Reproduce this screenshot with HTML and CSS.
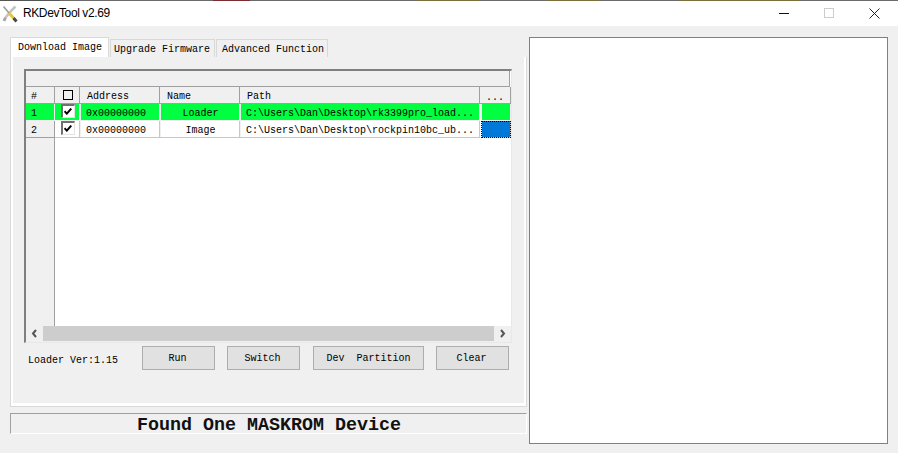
FILE: index.html
```html
<!DOCTYPE html>
<html lang="en">
<head>
<meta charset="utf-8">
<title>RKDevTool v2.69</title>
<link rel="stylesheet" href="styles.css">
</head>
<body>
<div class="window">
  <div class="top-strip"></div>
  <header class="titlebar">
    <div class="title-left">
      <svg class="app-icon" width="16" height="18" viewBox="0 0 16 18">
        <path d="M13.5 1.5 L10 5 L3.5 12.5" stroke="#c4c4c4" stroke-width="2.6" fill="none"/>
        <path d="M3.5 12.5 L2 16" stroke="#a8a8a8" stroke-width="3" fill="none"/>
        <path d="M1.5 1.5 L7 8" stroke="#9c9c9c" stroke-width="1.6" fill="none"/>
        <path d="M7 8 L11.5 13" stroke="#e8c53a" stroke-width="3" fill="none"/>
        <path d="M11.5 13 L14.5 16.5" stroke="#4a4a3a" stroke-width="3" fill="none"/>
      </svg>
      <span class="app-title">RKDevTool v2.69</span>
    </div>
    <div class="win-controls">
      <svg width="10" height="11" viewBox="0 0 10 11"><path d="M0 5.5H10" stroke="#111" fill="none"/></svg>
      <svg width="10" height="11" viewBox="0 0 10 11"><rect x=".5" y=".5" width="9" height="9" stroke="#ccc" fill="none"/></svg>
      <svg width="11" height="11" viewBox="0 0 11 11"><path d="M.5 .5L10.5 10.5M10.5 .5L.5 10.5" stroke="#222" fill="none"/></svg>
    </div>
  </header>

  <main class="client">
    <section class="left">
      <nav class="tabs">
        <span class="tab active">Download Image</span>
        <span class="tab">Upgrade Firmware</span>
        <span class="tab">Advanced Function</span>
      </nav>
      <div class="tab-panel">
        <div class="grid">
          <div class="grid-top"></div>
          <div class="row head">
            <span class="cell fixed">#</span>
            <span class="cell fixed center"><i class="box"></i></span>
            <span class="cell fixed">Address</span>
            <span class="cell fixed">Name</span>
            <span class="cell fixed">Path</span>
            <span class="cell fixed center dots">...</span>
          </div>
          <div class="row green">
            <span class="cell fixed num">1</span>
            <span class="cell center"><i class="check">
              <svg width="8" height="7" viewBox="0 0 8 7"><path d="M.5 3.2L2.8 5.6L7.3 .6" stroke="#000" stroke-width="2" fill="none"/></svg>
            </i></span>
            <span class="cell">0x00000000</span>
            <span class="cell center">Loader</span>
            <span class="cell">C:\Users\Dan\Desktop\rk3399pro_load...</span>
            <span class="cell last"></span>
          </div>
          <div class="row">
            <span class="cell fixed num">2</span>
            <span class="cell center"><i class="check">
              <svg width="8" height="7" viewBox="0 0 8 7"><path d="M.5 3.2L2.8 5.6L7.3 .6" stroke="#000" stroke-width="2" fill="none"/></svg>
            </i></span>
            <span class="cell">0x00000000</span>
            <span class="cell center">Image</span>
            <span class="cell">C:\Users\Dan\Desktop\rockpin10bc_ub...</span>
            <span class="cell last selected"></span>
          </div>
          <div class="grid-empty"><div class="fixed-col"></div></div>
          <div class="hscroll">
            <svg width="17" height="15" viewBox="0 0 17 15"><path d="M10 4L7 7.5L10 11" stroke="#555" stroke-width="2" fill="none"/></svg>
            <div class="thumb"></div>
            <svg width="17" height="15" viewBox="0 0 17 15"><path d="M7 4L10 7.5L7 11" stroke="#555" stroke-width="2" fill="none"/></svg>
          </div>
        </div>
        <div class="actions">
          <span class="loader-ver">Loader Ver:1.15</span>
          <button class="btn">Run</button>
          <button class="btn">Switch</button>
          <button class="btn btn-dev">Dev&nbsp;&nbsp;Partition</button>
          <button class="btn">Clear</button>
        </div>
      </div>
      <div class="status">Found One MASKROM Device</div>
    </section>
    <aside class="log"></aside>
  </main>
</div>
</body>
</html>
```
FILE: styles.css
```css
* { box-sizing: border-box; }
html, body { margin: 0; padding: 0; }
body { width: 898px; height: 453px; overflow: hidden; background: #f0f0f0; font-family: "Liberation Mono", monospace; font-size: 10px; color: #000; }
.window { display: flex; flex-direction: column; height: 453px; }

.top-strip { height: 1px; flex: none; background: linear-gradient(to right, #555 0 60px, #6b6b6b 60px 213px, #7a2a30 213px 250px, #6b6b6b 250px 417px, #7d6f3c 417px 480px, #6b6b6b 480px 547px, #7d6f3c 547px 600px, #6b6b6b 600px 680px, #7d6f3c 680px 800px, #6b6b6b 800px); }
.titlebar { height: 25px; flex: none; background: #fff; display: flex; justify-content: space-between; align-items: center; }
.title-left { display: flex; align-items: center; gap: 5px; padding-left: 2px; margin-top: -1px; }
.app-icon { display: block; margin-top: 2px; }
.app-title { font-family: "Liberation Sans", sans-serif; font-size: 12px; letter-spacing: -0.4px; color: #000; }
.win-controls { display: flex; gap: 35px; padding-right: 18px; margin-top: -1px; }
.win-controls svg { display: block; }

.client { flex: 1; display: flex; align-items: flex-start; padding: 11px 11px 0 10px; gap: 2px; }
.left { width: 517px; flex: none; }

.tabs { display: flex; height: 20px; align-items: flex-end; }
.tab { height: 18px; border: 1px solid #d9d9d9; border-bottom: 0; line-height: 20px; margin-left: 1px; background: #f0f0f0; white-space: nowrap; }
.tab:nth-child(1) { height: 20px; width: 99px; margin-left: 0; padding-left: 7px; background: #fff; line-height: 19px; }
.tab:nth-child(2) { width: 105px; padding-left: 3px; }
.tab:nth-child(3) { width: 112px; padding-left: 5px; }

.tab-panel { height: 350px; width: 517px; border: 1px solid #d9d9d9; border-top: 0; box-shadow: inset 2px 0 #fff, inset -2px 0 #fff, inset 0 -3px #fff; padding: 12px 15px 0 13px; }

.grid { width: 488px; height: 274px; background: #fff; border-top: 2px solid #808080; border-left: 2px solid #808080; border-right: 1px solid #e8e8e8; border-bottom: 1px solid #e8e8e8; display: flex; flex-direction: column; }
.grid-top { height: 16px; flex: none; background: #f0f0f0; border-right: 1px solid #a0a0a0; border-bottom: 1px solid #a0a0a0; margin-right: 1px; }

.row { flex: none; display: grid; grid-template-columns: 29px 25px 80px 80px 240px 31px; height: 17px; }
.cell { border-right: 1px solid #a0a0a0; border-bottom: 1px solid #a0a0a0; line-height: 20px; padding-left: 6px; white-space: nowrap; overflow: hidden; }
.row.head .cell { padding-left: 7px; }
.row.head .cell:first-child { padding-left: 5px; }
.fixed { background: #f0f0f0; }
.row.head .center { text-align: center; padding-left: 0; }
.row.head .cell:nth-child(2) { padding-left: 1px; }
.center { text-align: center; padding-left: 2px; }
.num { padding-left: 5px; }
.row.head .dots { line-height: 22px; }
.row.green .cell { background: #00ff40; border-color: #f0f0f0; }
.row .cell:not(.fixed) { border-color: #c8c8c8; }
.row.green .cell:not(.fixed) { border-color: #f0f0f0; }
.row .cell:nth-child(n+3):not(.fixed) { box-shadow: inset 1px 0 #f0f0f0; }
.row .selected { background: #0078d7; box-shadow: inset 0 0 0 1px #ff8a00; outline: 1px dotted #000; outline-offset: -1px; margin-left: 1px; }
.row.green .last { margin-left: 1px; box-shadow: none; }

.row .cell:nth-child(2):not(.fixed) { padding-left: 1px; }
.box { display: inline-block; width: 10px; height: 10px; border: 1px solid #000; vertical-align: middle; margin-top: -2px; }
.check { display: inline-flex; width: 14px; height: 14px; border-top: 2px solid #707070; border-left: 2px solid #707070; border-right: 1px solid #e3e3e3; border-bottom: 1px solid #e3e3e3; background: #fff; vertical-align: middle; margin-top: -5px; align-items: center; justify-content: center; }
.check svg { display: block; }

.grid-empty { flex: 1; min-height: 0; background: #fff; }
.fixed-col { width: 29px; height: 100%; background: #f0f0f0; border-right: 1px solid #a0a0a0; }

.hscroll { height: 16px; flex: none; display: flex; align-items: stretch; background: #f0f0f0; }
.hscroll svg { flex: none; display: block; }
.thumb { flex: 1; height: 15px; background: #cdcdcd; }

.actions { display: grid; grid-template-columns: 85px 86px 123px 73px; position: relative; margin: 3px 0 0 118px; height: 24px; }
.loader-ver { position: absolute; left: -114px; top: 9px; white-space: nowrap; }
.btn { font: inherit; width: 73px; height: 24px; background: #e1e1e1; border: 1px solid #adadad; padding: 1px 2px 0 0; color: #000; border-radius: 0; }
.btn-dev { width: 111px; padding-right: 0; }

.status { margin-top: 6px; height: 21px; width: 517px; border-top: 1px solid #a0a0a0; border-left: 1px solid #a0a0a0; border-bottom: 1px solid #fff; border-right: 1px solid #fff; font-size: 18.33px; font-weight: bold; line-height: 23px; padding-left: 126px; white-space: nowrap; color: #111; }

.log { width: 359px; height: 407px; flex: none; background: #fff; border: 1px solid #7f7f85; }
```
